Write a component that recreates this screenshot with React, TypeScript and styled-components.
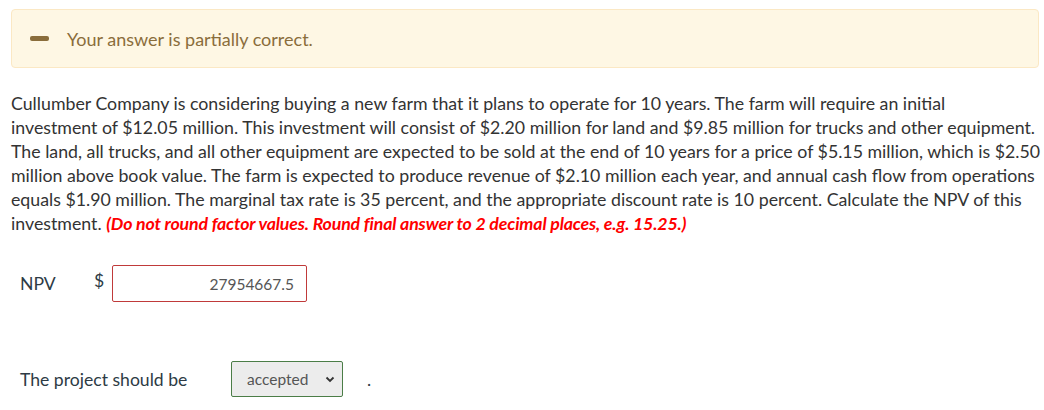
import React from 'react'
import styled, { createGlobalStyle } from 'styled-components'

const GlobalStyle = createGlobalStyle`
  html, body {
    margin: 0;
    padding: 0;
    background: #fff;
    font-family: Lato, "Open Sans", "Liberation Sans", sans-serif;
  }
`

const Page = styled.div`
  padding: 9px 0 0 11px;
`

const Banner = styled.div`
  display: flex;
  align-items: center;
  gap: 18px;
  height: 57px;
  margin-right: 5px;
  padding-left: 18px;
  border: 1px solid #fbe8c4;
  border-radius: 4px;
  background: #fef7e4;
  color: #8a6d3b;
  font-size: 18px;
`

const Dash = styled.span`
  display: block;
  width: 19px;
  height: 5px;
  border-radius: 2px;
  background: #8a6d3b;
`

const Question = styled.p`
  margin: 23px 0 0;
  font-size: 17.75px;
  line-height: 24px;
  color: #333;
  white-space: nowrap;
`

const Hint = styled.em`
  color: #f00;
  font-weight: 700;
  letter-spacing: -0.15px;
`

const Row = styled.div<{ $top: number }>`
  display: flex;
  align-items: center;
  margin-top: ${(p) => p.$top}px;
  padding-left: 9px;
  font-size: 17.6px;
  color: #2d3b45;
`

const Label = styled.span<{ $width: number }>`
  width: ${(p) => p.$width}px;
`

const Currency = styled.span`
  width: 18px;
  position: relative;
  top: -3px;
`

const NumberInput = styled.input`
  box-sizing: border-box;
  width: 195px;
  height: 37px;
  padding: 0 12px;
  border: 1px solid #c03a3a;
  border-radius: 2px;
  font-family: inherit;
  font-size: 15.5px;
  color: #555;
  text-align: right;
  background: #fff;
  outline: none;
`

const SelectBox = styled.div`
  box-sizing: border-box;
  display: flex;
  align-items: center;
  width: 112px;
  height: 36px;
  padding: 0 7px 0 15px;
  border: 1px solid #4b7d47;
  border-radius: 2px;
  background: #ececec;
  font-size: 15.5px;
  color: #555;
`

const SelectText = styled.span`
  flex: 1;
`

const Period = styled.span`
  margin-left: 24px;
`

export default function App() {
  return (
    <>
      <GlobalStyle />
      <Page>
        <Banner>
          <Dash />
          <span>Your answer is partially correct.</span>
        </Banner>
        <Question>
          Cullumber Company is considering buying a new farm that it plans to operate for 10 years. The farm will require an initial<br />
          investment of $12.05 million. This investment will consist of $2.20 million for land and $9.85 million for trucks and other equipment.<br />
          The land, all trucks, and all other equipment are expected to be sold at the end of 10 years for a price of $5.15 million, which is $2.50<br />
          million above book value. The farm is expected to produce revenue of $2.10 million each year, and annual cash flow from operations<br />
          equals $1.90 million. The marginal tax rate is 35 percent, and the appropriate discount rate is 10 percent. Calculate the NPV of this<br />
          investment. <Hint>(Do not round factor values. Round final answer to 2 decimal places, e.g. 15.25.)</Hint>
        </Question>
        <Row $top={30}>
          <Label $width={74}>NPV</Label>
          <Currency>$</Currency>
          <NumberInput defaultValue="27954667.5" />
        </Row>
        <Row $top={59}>
          <Label $width={211}>The project should be</Label>
          <SelectBox>
            <SelectText>accepted</SelectText>
            <svg width="10" height="7" viewBox="0 0 10 7">
              <path d="M1.5 1.5 L5 5 L8.5 1.5" fill="none" stroke="#333" strokeWidth="1.8" />
            </svg>
          </SelectBox>
          <Period>.</Period>
        </Row>
      </Page>
    </>
  )
}
